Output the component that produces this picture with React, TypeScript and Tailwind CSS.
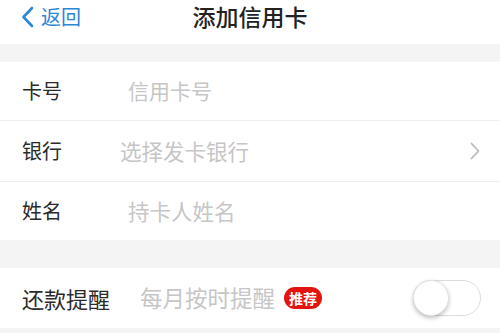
import React from "react";

const font = { fontFamily: '"Noto Sans CJK SC", "Noto Sans", sans-serif' };

export default function App() {
  return (
    <div className="w-[500px] h-[333px] bg-white overflow-hidden" style={font}>
      {/* header */}
      <div className="relative h-[44px] flex items-start">
        <div className="flex items-center pl-[21px] pt-[6px] text-[#2d86d6]">
          <svg width="13" height="22" viewBox="0 0 13 22" fill="none">
            <path d="M11 2 L2.5 11 L11 20" stroke="#2d86d6" strokeWidth="2.6" strokeLinecap="round" strokeLinejoin="round" />
          </svg>
          <span className="ml-[7px] text-[20px] leading-[22px]">返回</span>
        </div>
        <div className="absolute left-0 right-0 top-[2px] text-center text-[23px] leading-[28px] text-[#222] font-medium">
          添加信用卡
        </div>
      </div>
      <div className="h-[18px] bg-[#f4f4f4]" />
      {/* rows */}
      <div className="flex flex-col">
        <div className="h-[59px] flex items-center border-b border-[#efefef]">
          <span className="pl-[22px] w-[128px] text-[20px] text-[#2a2a2a]">卡号</span>
          <span className="text-[21px] text-[#c6c6c6]">信用卡号</span>
        </div>
        <div className="h-[61px] flex items-center border-b border-[#efefef]">
          <span className="pl-[22px] w-[120px] text-[20px] text-[#2a2a2a]">银行</span>
          <span className="flex-1 text-[21.5px] text-[#c6c6c6]">选择发卡银行</span>
          <svg width="10" height="18" viewBox="0 0 10 18" fill="none" className="mr-[20px]">
            <path d="M1.5 1.5 L8.5 9 L1.5 16.5" stroke="#b9b9b9" strokeWidth="1.8" strokeLinecap="round" strokeLinejoin="round" />
          </svg>
        </div>
        <div className="h-[58px] flex items-center">
          <span className="pl-[22px] w-[128px] text-[20px] text-[#2a2a2a]">姓名</span>
          <span className="text-[21.5px] text-[#c6c6c6]">持卡人姓名</span>
        </div>
      </div>
      <div className="h-[28px] bg-[#f4f4f4]" />
      <div className="h-[60px] flex items-center">
        <span className="pl-[22px] w-[140px] text-[22px] text-[#2a2a2a]">还款提醒</span>
        <span className="text-[22.5px] text-[#c6c6c6]">每月按时提醒</span>
        <span className="ml-[9px] rounded-full bg-[#e3130f] text-white text-[14px] leading-[22px] px-[5px] font-bold">推荐</span>
        <div className="ml-auto mr-[19px] w-[68px] h-[36px] rounded-full border border-[#dcdcdc] bg-white relative">
          <div className="absolute left-[-1px] top-[-1px] w-[36px] h-[36px] rounded-full bg-white shadow-[0_2px_4px_rgba(0,0,0,0.25)] border border-[#e2e2e2]" />
        </div>
      </div>
      <div className="h-[6px] bg-[#f4f4f4]" />
    </div>
  );
}
